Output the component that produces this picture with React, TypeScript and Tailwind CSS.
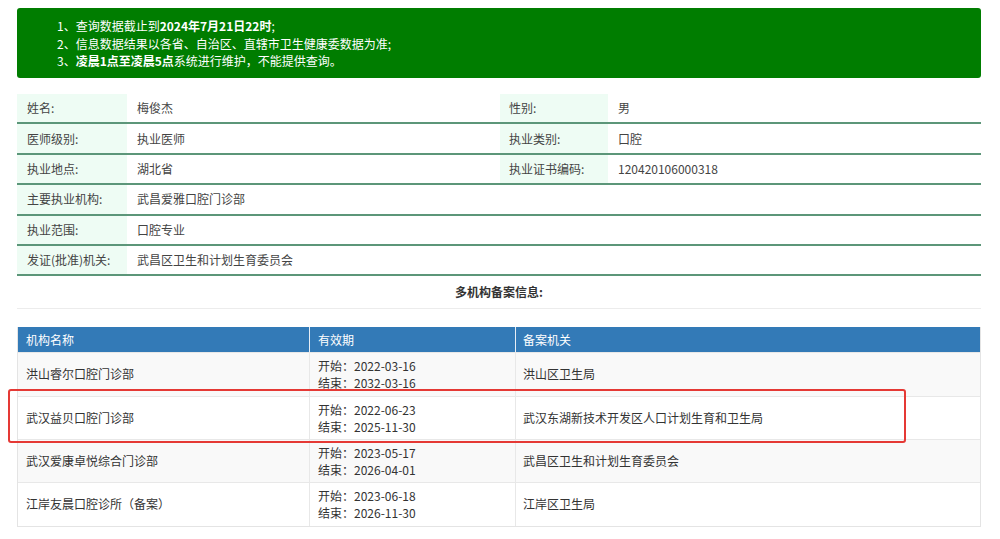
import React from "react";

const font = {
  fontFamily: '"Noto Sans CJK SC", "Noto Sans", sans-serif',
};

const infoRows: { label: string; value: string; label2?: string; value2?: string }[] = [
  { label: "姓名:", value: "梅俊杰", label2: "性别:", value2: "男" },
  { label: "医师级别:", value: "执业医师", label2: "执业类别:", value2: "口腔" },
  { label: "执业地点:", value: "湖北省", label2: "执业证书编码:", value2: "120420106000318" },
  { label: "主要执业机构:", value: "武昌爱雅口腔门诊部" },
  { label: "执业范围:", value: "口腔专业" },
  { label: "发证(批准)机关:", value: "武昌区卫生和计划生育委员会" },
];

const orgs = [
  { name: "洪山睿尔口腔门诊部", start: "2022-03-16", end: "2032-03-16", dept: "洪山区卫生局" },
  { name: "武汉益贝口腔门诊部", start: "2022-06-23", end: "2025-11-30", dept: "武汉东湖新技术开发区人口计划生育和卫生局" },
  { name: "武汉爱康卓悦综合门诊部", start: "2023-05-17", end: "2026-04-01", dept: "武昌区卫生和计划生育委员会" },
  { name: "江岸友晨口腔诊所（备案）", start: "2023-06-18", end: "2026-11-30", dept: "江岸区卫生局" },
];

export default function App() {
  return (
    <div
      className="w-[1000px] h-[539px] overflow-hidden bg-white pl-[17px] pr-[19px] pt-[8px] text-[12px] text-[#333]"
      style={font}
    >
      {/* notice */}
      <div className="h-[70px] rounded-[3px] bg-[#007d00] pl-[40px] pt-[9px] text-white leading-[17.5px]">
        <div>
          1、查询数据截止到<b>2024年7月21日22时</b>;
        </div>
        <div>2、信息数据结果以各省、自治区、直辖市卫生健康委数据为准;</div>
        <div>
          3、<b>凌晨1点至凌晨5点</b>系统进行维护，不能提供查询。
        </div>
      </div>

      {/* doctor info */}
      <div className="mt-[16px]">
        {infoRows.map((r) => (
          <div
            key={r.label}
            className="grid grid-cols-[110px_373px_108px_1fr] h-[30.4px] border-b-2 border-[#5c9679] text-[#444]"
          >
            <div className="bg-[#eefcf4] pl-[10px] flex items-center">{r.label}</div>
            {r.label2 ? (
              <>
                <div className="pl-[10px] flex items-center">{r.value}</div>
                <div className="bg-[#eefcf4] pl-[9px] flex items-center">{r.label2}</div>
                <div className="pl-[10px] flex items-center">{r.value2}</div>
              </>
            ) : (
              <div className="col-span-3 pl-[10px] flex items-center">{r.value}</div>
            )}
          </div>
        ))}
        <div className="h-[33px] border-b border-[#ececec] flex items-center justify-center font-bold text-[#333]">
          多机构备案信息:
        </div>
      </div>

      {/* org table */}
      <div className="mt-[18px] border border-[#e4e4e4] border-t-0">
        <div className="grid grid-cols-[291px_206px_1fr] h-[25px] bg-[#337ab7] text-white">
          <div className="pl-[8px] flex items-center">机构名称</div>
          <div className="pl-[8px] flex items-center border-l border-[#e8eef5]">有效期</div>
          <div className="pl-[7px] flex items-center border-l border-[#e8eef5]">备案机关</div>
        </div>
        {orgs.map((o, i) => (
          <div
            key={o.name}
            className={
              "relative grid grid-cols-[291px_206px_1fr] h-[43.3px] border-t border-[#e8e8e8] " +
              (i % 2 === 0 ? "bg-[#f9f9f9]" : "bg-white") +
              (i === 1 ? " z-10" : "")
            }
          >
            <div className="pl-[8px] flex items-center">{o.name}</div>
            <div className="pl-[8px] flex flex-col justify-center leading-[17px] border-l border-[#e8e8e8]">
              <div>开始：{o.start}</div>
              <div>结束：{o.end}</div>
            </div>
            <div className="pl-[7px] flex items-center border-l border-[#e8e8e8]">{o.dept}</div>
            {i === 1 && (
              <div className="absolute z-10 left-[-10px] top-[-8px] w-[898px] h-[54px] rounded-[3px] border-2 border-[#e53935] pointer-events-none" />
            )}
          </div>
        ))}
      </div>
    </div>
  );
}
